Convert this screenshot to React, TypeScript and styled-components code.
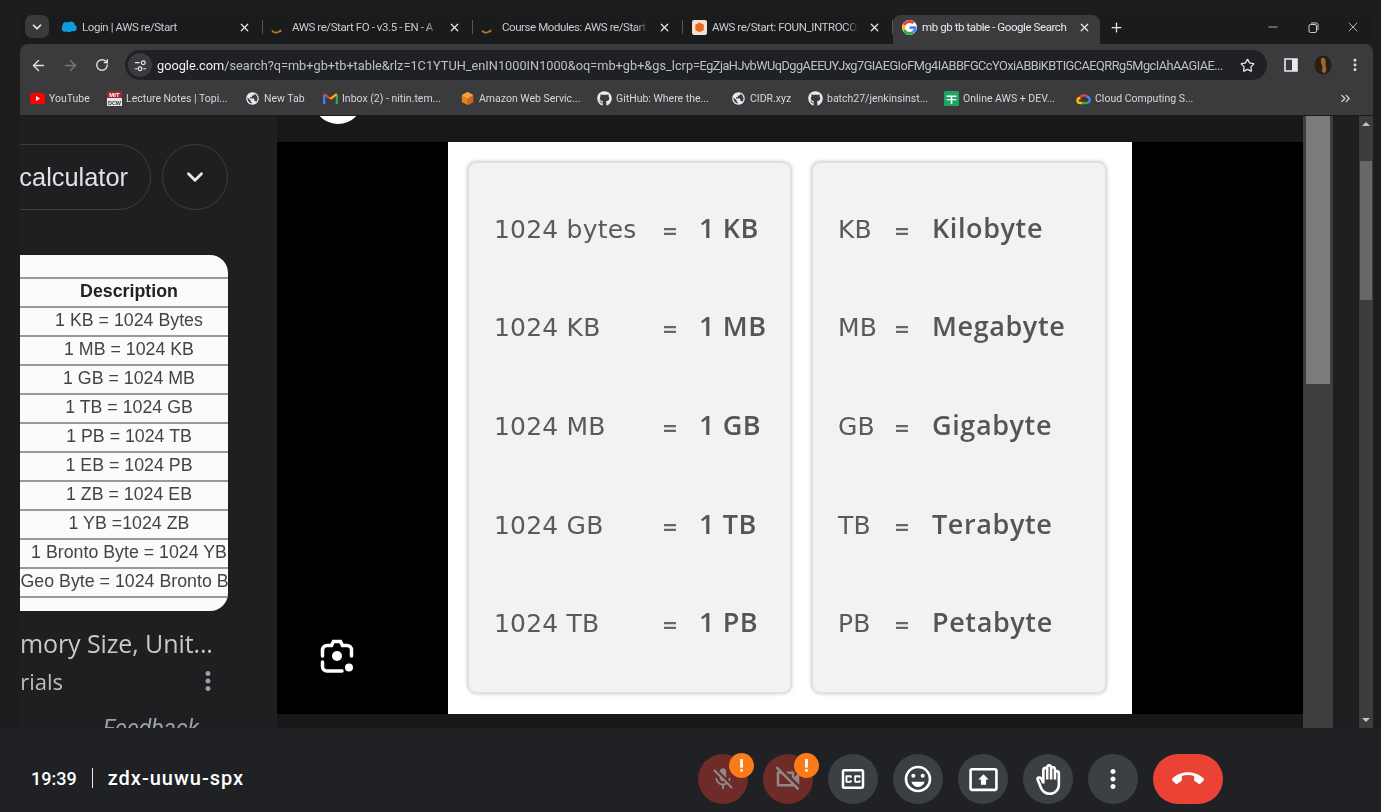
import React from 'react';
import styled, { createGlobalStyle } from 'styled-components';
import { ArrowLeft, ArrowRight, RotateCw, Star, X, Plus, Minus, ChevronDown, ChevronsRight, MoreVertical } from 'lucide-react';
import { FaGithub } from 'react-icons/fa';
import {
  MdOutlineClosedCaption, MdOutlineEmojiEmotions, MdOutlinePresentToAll, MdOutlineBackHand,
  MdMoreVert, MdCallEnd, MdMicOff, MdOutlineVideocamOff, MdPriorityHigh, MdPublic,
} from 'react-icons/md';

const Global = createGlobalStyle`
  html, body { margin: 0; padding: 0; background: #1f2125; overflow: hidden; }
  * { box-sizing: border-box; }
`;

const Page = styled.div`
  width: 1381px; height: 812px; overflow: hidden; display: flex; flex-direction: column;
  background: #1f2125; font-family: Roboto, "Liberation Sans", sans-serif;
`;
const Screen = styled.div`
  height: 728px; padding: 15px 8px 0 20px; display: flex; flex-direction: column; flex: none;
  background: #1c1d1f; filter: blur(0.35px);
`;
const TabStrip = styled.div`
  height: 29px; display: flex; align-items: stretch; padding-left: 5px; background: #1a1b1d; flex: none;
`;
const TabSearch = styled.div`
  width: 24px; height: 23px; margin-right: 4px; border-radius: 7px; background: #3a3a3c; color: #e8eaed;
  display: flex; align-items: center; justify-content: center;
`;
const Tab = styled.div<{ $active?: boolean; $last?: boolean }>`
  position: relative; width: ${p => (p.$active ? 207 : 210)}px; display: flex; align-items: center;
  padding: 0 ${p => (p.$active ? 8 : 11)}px 5px 8px; gap: 5px; flex: none;
  background: ${p => (p.$active ? '#3b3b3d' : 'transparent')};
  border-radius: 8px 8px 0 0;
  color: ${p => (p.$active ? '#e8eaed' : '#c9cbce')};
  ${p => (p.$last ? '' : `&::after { content: ''; position: absolute; right: 0; top: 5px; height: 14px; width: 1px; background: #55565a; }`)}
`;
const TabIconBox = styled.span`
  width: 16px; height: 16px; display: flex; align-items: center; justify-content: center; flex: none;
`;
const TabTitle = styled.span<{ $fade?: boolean }>`
  flex: 1; min-width: 0; white-space: nowrap; overflow: hidden; font-size: 11.5px; letter-spacing: -0.42px;
  ${p => (p.$fade ? `
    -webkit-mask-image: linear-gradient(90deg, #000 90%, transparent 98%);
    mask-image: linear-gradient(90deg, #000 90%, transparent 98%);
  ` : '')}
`;
const TabClose = styled.span`
  width: 16px; height: 16px; display: flex; align-items: center; justify-content: center; flex: none; color: #e8eaed;
`;
const NewTab = styled.span`
  width: 16px; margin-left: 9px; padding-bottom: 5px; display: flex; align-items: center; color: #e8eaed;
`;
const WindowControls = styled.div`
  margin-left: auto; padding-bottom: 5px; display: flex; align-items: center; color: #c9cbce;
`;
const WindowButton = styled.span`
  width: 40px; display: flex; justify-content: center;
`;
const Toolbar = styled.div`
  height: 71px; flex: none; background: #3b3b3d; border-radius: 8px 8px 0 0; display: flex; flex-direction: column;
`;
const NavRow = styled.div`
  height: 36px; padding: 6px 2px 0; display: flex; align-items: stretch; flex: none; color: #dfe1e5;
`;
const IconButton = styled.span<{ $dim?: boolean }>`
  width: 32px; display: flex; align-items: center; justify-content: center; flex: none;
  color: ${p => (p.$dim ? '#77787b' : '#dfe1e5')};
`;
const Omnibox = styled.div`
  width: 1142px; margin: 0 8px 0 7px; height: 30px; border-radius: 15px; background: #202124;
  display: flex; align-items: center; padding: 0 12px 0 3px; flex: none;
`;
const SiteChip = styled.span`
  width: 24px; height: 24px; border-radius: 50%; background: #3b3b3d; display: flex; align-items: center; justify-content: center; flex: none; margin-right: 5px;
`;
const Url = styled.span`
  flex: 1; min-width: 0; margin-right: 11px; overflow: hidden; white-space: nowrap; font-size: 12.75px; color: #bdc1c6;
  b { font-weight: 400; color: #f1f3f4; }
`;
const UrlTail = styled.span`
  letter-spacing: -0.52px;
`;
const Bookmarks = styled.div`
  height: 35px; padding: 5px 0 4px 10px; display: flex; align-items: center; flex: none;
`;
const Bookmark = styled.div<{ $w: number }>`
  width: ${p => p.$w}px; flex: none; display: flex; align-items: center; gap: 4px; color: #d5d7da; font-size: 10.5px; white-space: nowrap;
`;
const BookmarkIcon = styled.span`
  width: 15px; height: 15px; display: flex; align-items: center; justify-content: center; flex: none; color: #e8eaed;
`;
const MoreBookmarks = styled.span`
  margin-left: auto; margin-right: 20px; color: #d5d7da; display: flex;
`;
const Workspace = styled.div`
  margin-top: 1px; height: 612px; display: flex; flex: none; background: #1f1f21;
`;
const SidePanel = styled.div`
  width: 257px; flex: none; overflow: hidden; display: flex; flex-direction: column; padding-top: 28px; color: #c8cacc;
`;
const ChipRow = styled.div`
  height: 66px; display: flex; gap: 11px; flex: none;
`;
const Pill = styled.div`
  width: 171px; margin-left: -40px; height: 66px; border-radius: 33px; border: 1px solid #3c3d40; flex: none;
  display: flex; align-items: center; justify-content: flex-end; padding-right: 22px;
  font-family: "Liberation Sans", Arial, sans-serif; font-size: 25.4px; color: #dfe1e5;
`;
const RoundChip = styled.div`
  width: 66px; height: 66px; border-radius: 50%; border: 1px solid #3c3d40; flex: none; display: flex; align-items: center; justify-content: center; color: #e8eaed;
`;
const TableCard = styled.div`
  width: 228px; height: 356px; margin: 45px 0 0 -20px; padding-top: 22px; border-radius: 0 18px 18px 0; background: #fbfbfb;
  overflow: hidden; flex: none; font-family: "Liberation Sans", Arial, sans-serif; filter: blur(0.5px);
`;
const SizeRow = styled.div<{ $head?: boolean }>`
  width: 258px; height: 29px; padding-bottom: 2px; border-top: 2px solid #999; display: flex; align-items: center; justify-content: center;
  font-size: 17.8px; white-space: nowrap; color: ${p => (p.$head ? '#222' : '#444')}; font-weight: ${p => (p.$head ? 700 : 400)};
  &:last-child { height: 16px; }
`;
const SizeText = styled.span` flex: none; `;
const CaptionTitle = styled.div`
  margin-top: 16px; width: 212px; height: 32px; line-height: 32px; font-size: 25px; white-space: nowrap; flex: none; color: #c6c8ca;
  font-family: "Open Sans", Roboto, sans-serif; letter-spacing: -0.1px;
`;
const CaptionRow = styled.div`
  margin-top: 8px; height: 28px; display: flex; align-items: center; justify-content: space-between; padding-right: 54px; flex: none;
`;
const Source = styled.span`
  font-size: 22px; color: #bcbec0; margin-left: -13px; font-family: "Open Sans", Roboto, sans-serif;
`;
const Dots = styled.span` color: #9aa0a6; display: flex; `;
const Feedback = styled.div`
  margin: 21px 0 0 83px; font-style: italic; font-size: 23px; line-height: 26px; color: #9aa0a6; flex: none;
`;
const Viewer = styled.div`
  position: relative; width: 1026px; flex: none; overflow: hidden; display: flex; flex-direction: column; background: #181819;
`;
const CloseDisc = styled.div`
  position: absolute; left: 36px; top: -42px; width: 50px; height: 50px; border-radius: 50%; background: #fff;
`;
const Letterbox = styled.div`
  margin-top: 26px; height: 572px; background: #000; display: flex; justify-content: center; flex: none;
`;
const LensButton = styled.div`
  position: absolute; left: 43px; top: 523px; width: 34px; height: 34px; color: #fff;
`;
const Picture = styled.div`
  width: 684px; height: 572px; background: #fff; padding: 20px 26px 21px 20px; display: grid; grid-template-columns: 323px 294px; gap: 21px; filter: blur(0.5px);
`;
const UnitCard = styled.div`
  background: #f2f2f2; border: 1px solid #e0e0e0; border-radius: 8px; box-shadow: 0 0 4px #b5b5b5;
  padding: 15px 0 21px 25px; display: grid; grid-template-rows: repeat(5, 1fr); font-family: "DejaVu Sans", sans-serif; color: #5a5a5a;
`;
const UnitRow = styled.div<{ $cols: string }>`
  display: grid; grid-template-columns: ${p => p.$cols}; align-items: baseline; align-content: center; font-size: 25px; letter-spacing: 0.2px; white-space: nowrap;
`;
const UnitStrong = styled.span`
  font-family: "Open Sans", "DejaVu Sans", sans-serif; font-weight: 600; color: #555; font-size: 27px; letter-spacing: 0.6px;
`;
const UnitEq = styled.span` font-size: 19px; font-weight: 700; color: #666; `;
const InnerScroll = styled.div`
  width: 30px; flex: none; background: #3e3e3e; padding: 0 3px;
`;
const InnerThumb = styled.div` height: 268px; background: #7b7b7b; `;
const Gutter = styled.div` width: 26px; flex: none; background: #1f1f21; `;
const OuterScroll = styled.div`
  width: 14px; flex: none; background: #3c3c3c; display: flex; flex-direction: column; align-items: center; padding-top: 6px; color: #c4c4c4;
`;
const Arrow = styled.div<{ $down?: boolean }>`
  width: 0; height: 0; border-left: 4px solid transparent; border-right: 4px solid transparent; flex: none;
  ${p => (p.$down ? 'border-top: 4px solid #c4c4c4; margin-top: auto; margin-bottom: 6px;' : 'border-bottom: 4px solid #c4c4c4;')}
`;
const OuterThumb = styled.div` width: 12px; height: 139px; margin-top: 35px; background: #676767; flex: none; `;
const MeetBar = styled.div`
  height: 84px; flex: none; display: flex; align-items: flex-start; padding-top: 26px; background: #1f2125; color: #fff;
`;
const MeetInfo = styled.div`
  width: 698px; flex: none; height: 50px; display: flex; align-items: center; padding-left: 31px; padding-bottom: 2px;
`;
const Clock = styled.span` font-size: 18px; font-weight: 500; `;
const InfoBar = styled.span` width: 1px; height: 20px; background: #e8eaed; margin: 0 15px; `;
const MeetCode = styled.span` font-size: 20px; font-weight: 500; letter-spacing: 1px; `;
const Controls = styled.div` display: flex; gap: 15px; `;
const ControlButton = styled.div<{ $tone?: 'warn' | 'end' }>`
  position: relative; height: 50px; width: ${p => (p.$tone === 'end' ? 70 : 50)}px; border-radius: 25px; display: flex; align-items: center; justify-content: center; flex: none;
  background: ${p => (p.$tone === 'warn' ? '#6e2b27' : p.$tone === 'end' ? '#ea4335' : '#3c4043')};
  color: ${p => (p.$tone === 'warn' ? '#8f8a88' : '#fff')};
`;
const Badge = styled.span`
  position: absolute; right: -6px; top: -1px; width: 25px; height: 25px; border-radius: 50%; background: #fa7b17; color: #fff; display: flex; align-items: center; justify-content: center;
`;

const Salesforce = () => (
  <svg width="16" height="12" viewBox="0 0 16 12"><g fill="#0d9dda"><circle cx="5" cy="4.500" r="3.500" /><circle cx="10" cy="4" r="3.600" /><circle cx="12.500" cy="7" r="3.200" /><circle cx="4" cy="7.500" r="3.200" /><circle cx="8" cy="8" r="3.200" /></g></svg>
);
const AwsSmile = () => (
  <svg width="16" height="16" viewBox="0 0 16 16"><path d="M1 11.500c1.500 2.500 5 3 8 .4M9.300 10.700l.2 1.700-1.700.3" fill="none" stroke="#b87a1c" strokeWidth="1.600" /></svg>
);
const Cube = ({ s = 13 }: { s?: number }) => (
  <svg width={s} height={s} viewBox="0 0 14 15"><path d="M7 0l6.500 3.500v8L7 15 .5 11.500v-8z" fill="#e8821e" /><path d="M7 7.500v7.500l6.500-3.500v-8z" fill="#c9681a" /><path d="M7 0l6.500 3.500L7 7.500.5 3.500z" fill="#f5a040" /></svg>
);
const AwsTile = () => (
  <svg width="15" height="15" viewBox="0 0 15 15"><rect width="15" height="15" rx="2" fill="#f4dfd0" /><g transform="translate(3 2.500) scale(.65)"><path d="M7 0l6.500 3.500v8L7 15 .5 11.500v-8z" fill="#e8681e" /></g></svg>
);
const GoogleG = () => (
  <svg width="15" height="15" viewBox="0 0 48 48" style={{ background: '#fff', borderRadius: '50%' }}>
    <path fill="#EA4335" d="M24 9.500c3.500 0 6.700 1.200 9.200 3.600l6.900-6.900C35.900 2.400 30.500 0 24 0 14.600 0 6.500 5.400 2.600 13.200l8 6.200C12.400 13.700 17.700 9.500 24 9.500z" />
    <path fill="#4285F4" d="M46.100 24.500c0-1.600-.1-3.100-.4-4.500H24v9h12.400c-.5 2.900-2.200 5.400-4.700 7l7.600 5.900c4.400-4.100 6.800-10.100 6.800-17.400z" />
    <path fill="#FBBC05" d="M10.500 28.600c-.5-1.400-.8-3-.8-4.600s.3-3.200.8-4.600l-8-6.200C.9 16.500 0 20.100 0 24s.9 7.500 2.600 10.800l7.900-6.200z" />
    <path fill="#34A853" d="M24 48c6.500 0 11.900-2.100 15.900-5.800l-7.600-5.900c-2.100 1.400-4.900 2.300-8.200 2.300-6.300 0-11.600-4.200-13.500-9.900l-8 6.200C6.500 42.600 14.600 48 24 48z" />
  </svg>
);
const Tune = () => (
  <svg width="13" height="13" viewBox="0 0 14 14" fill="none" stroke="#e8eaed" strokeWidth="1.300"><path d="M1 4h5M1 10.500h3M10 10.500h3" /><circle cx="10" cy="4" r="2" /><circle cx="6.500" cy="10.500" r="2" /></svg>
);
const Youtube = () => (
  <svg width="15" height="11" viewBox="0 0 15 11"><rect width="15" height="11" rx="2.500" fill="#f00" /><path d="M6 3l4 2.500L6 8z" fill="#fff" /></svg>
);
const MitIcon = () => (
  <svg width="15" height="15" viewBox="0 0 15 15"><rect width="15" height="7" fill="#a3262b" /><rect y="7" width="15" height="8" fill="#e6e6e6" /><text x="7.500" y="6" fontSize="6" fontWeight="700" textAnchor="middle" fill="#fff" fontFamily="Liberation Sans">MIT</text><text x="7.500" y="13.500" fontSize="5.500" fontWeight="700" textAnchor="middle" fill="#333" fontFamily="Liberation Sans">DCW</text></svg>
);
const GmailM = () => (
  <svg width="15" height="12" viewBox="0 0 15 12" fill="none" strokeWidth="2.200"><path d="M1.200 12V3" stroke="#4285f4" /><path d="M13.800 12V3" stroke="#34a853" /><path d="M1.200 2l6.300 4.800" stroke="#ea4335" /><path d="M7.500 6.800L13.800 2" stroke="#fbbc05" /></svg>
);
const SheetIcon = () => (
  <svg width="15" height="15" viewBox="0 0 15 15"><rect width="15" height="15" rx="1.500" fill="#1fa463" /><path d="M2.500 4.500h10V6H8.300v7H6.700V6H2.500z" fill="#fff" /><path d="M2.500 8h10v1.300h-10z" fill="#fff" opacity=".85" /></svg>
);
const CloudHex = () => (
  <svg width="15" height="13" viewBox="0 0 15 13" fill="none" strokeWidth="2.400"><path d="M4 7.500a3.800 3.800 0 0 1 6.500-3" stroke="#ea4335" /><path d="M10.500 4.500A3.500 3.500 0 0 1 12 11" stroke="#4285f4" /><path d="M12 11H6" stroke="#34a853" /><path d="M6 11H4a2.500 2.500 0 0 1 0-5" stroke="#fbbc05" /></svg>
);
const Lens = () => (
  <svg width="34" height="34" viewBox="0 0 34 34" fill="none" stroke="currentColor" strokeWidth="3.500" strokeLinecap="round">
    <path d="M2.500 17v-6a4.500 4.500 0 0 1 4.500-4.500h4.500l2-4h7l2 4H27a4.500 4.500 0 0 1 4.500 4.500v6" />
    <path d="M2.500 23v4.500A4.500 4.500 0 0 0 7 32h15" />
    <circle cx="17" cy="17" r="5" fill="currentColor" stroke="none" />
    <circle cx="29" cy="28.500" r="4" fill="currentColor" stroke="none" />
  </svg>
);
const SidePanelIcon = () => (
  <svg width="14" height="14" viewBox="0 0 14 14"><path d="M1 1h12v12H1z" fill="none" stroke="#e8eaed" strokeWidth="1.600" /><rect x="8" y="1" width="5" height="12" fill="#e8eaed" /></svg>
);
const Avatar = () => (
  <svg width="18" height="20" viewBox="0 0 18 20"><ellipse cx="9" cy="10" rx="8.500" ry="9.500" fill="#2a1d12" /><path d="M8 3c3-1 4 2 3.500 5s1.500 5 .5 8-4 2-4 0 1-4 0-6-2-6 0-7z" fill="#a5652a" /></svg>
);

const tabs = [
  { title: 'Login | AWS re/Start', icon: <Salesforce /> },
  { title: 'AWS re/Start FO - v3.5 - EN - A', icon: <AwsSmile />, fade: true },
  { title: 'Course Modules: AWS re/Start F', icon: <AwsSmile />, fade: true },
  { title: 'AWS re/Start: FOUN_INTROCOM', icon: <AwsTile />, fade: true },
  { title: 'mb gb tb table - Google Search', icon: <GoogleG />, active: true },
];

const marks = [
  { w: 77, label: 'YouTube', icon: <Youtube /> },
  { w: 138, label: 'Lecture Notes | Topi...', icon: <MitIcon /> },
  { w: 78, label: 'New Tab', icon: <MdPublic size={17} /> },
  { w: 137, label: 'Inbox (2) - nitin.tem...', icon: <GmailM /> },
  { w: 137, label: 'Amazon Web Servic...', icon: <Cube /> },
  { w: 134, label: 'GitHub: Where the...', icon: <FaGithub size={15} /> },
  { w: 77, label: 'CIDR.xyz', icon: <MdPublic size={17} /> },
  { w: 136, label: 'batch27/jenkinsinst...', icon: <FaGithub size={15} /> },
  { w: 132, label: 'Online AWS + DEV...', icon: <SheetIcon /> },
  { w: 130, label: 'Cloud Computing S...', icon: <CloudHex /> },
];

const sizes = [
  'Description', '1 KB = 1024 Bytes', '1 MB = 1024 KB', '1 GB = 1024 MB', '1 TB = 1024 GB', '1 PB = 1024 TB',
  '1 EB = 1024 PB', '1 ZB = 1024 EB', '1 YB =1024 ZB', '1 Bronto Byte = 1024 YB', '1 Geo Byte = 1024 Bronto Byte',
];

const conversions = [
  ['1024 bytes', '1 KB'], ['1024 KB', '1 MB'], ['1024 MB', '1 GB'], ['1024 GB', '1 TB'], ['1024 TB', '1 PB'],
];
const names = [
  ['KB', 'Kilobyte'], ['MB', 'Megabyte'], ['GB', 'Gigabyte'], ['TB', 'Terabyte'], ['PB', 'Petabyte'],
];

export default function App() {
  return (
    <Page>
      <Global />
      <Screen>
        <TabStrip>
          <TabSearch><ChevronDown size={14} strokeWidth={3} /></TabSearch>
          {tabs.map((t, i) => (
            <Tab key={t.title} $active={t.active} $last={i >= 4}>
              <TabIconBox>{t.icon}</TabIconBox>
              <TabTitle $fade={t.fade}>{t.title}</TabTitle>
              <TabClose><X size={13} strokeWidth={2.2} /></TabClose>
            </Tab>
          ))}
          <NewTab><Plus size={15} strokeWidth={2} /></NewTab>
          <WindowControls>
            <WindowButton><Minus size={14} strokeWidth={1.4} /></WindowButton>
            <WindowButton>
              <svg width="11" height="11" viewBox="0 0 11 11" fill="none" stroke="currentColor"><rect x="1" y="2.500" width="7.500" height="8" rx="1.500" /><path d="M3 1h5.500a2 2 0 0 1 1.500 1.500V8" /></svg>
            </WindowButton>
            <WindowButton><X size={16} strokeWidth={1.3} /></WindowButton>
          </WindowControls>
        </TabStrip>
        <Toolbar>
          <NavRow>
            <IconButton><ArrowLeft size={17} strokeWidth={2} /></IconButton>
            <IconButton $dim><ArrowRight size={17} strokeWidth={2} /></IconButton>
            <IconButton><RotateCw size={14} strokeWidth={2.4} /></IconButton>
            <Omnibox>
              <SiteChip><Tune /></SiteChip>
              <Url><b>google.com</b>/search?q=mb+gb+tb+table&amp;rlz=1C1YTUH_enIN1000IN1000&amp;oq=mb+gb+&amp;gs_lcrp<UrlTail>=EgZjaHJvbWUqDggAEEUYJxg7GIAEGIoFMg4IABBFGCcYOxiABBiKBTIGCAEQRRg5MgcIAhAAGIAE...</UrlTail></Url>
              <Star size={15} strokeWidth={2} color="#e8eaed" />
            </Omnibox>
            <IconButton><SidePanelIcon /></IconButton>
            <IconButton><Avatar /></IconButton>
            <IconButton><MoreVertical size={16} strokeWidth={2.4} /></IconButton>
          </NavRow>
          <Bookmarks>
            {marks.map(m => (
              <Bookmark key={m.label} $w={m.w}>
                <BookmarkIcon>{m.icon}</BookmarkIcon>
                {m.label}
              </Bookmark>
            ))}
            <MoreBookmarks><ChevronsRight size={15} /></MoreBookmarks>
          </Bookmarks>
        </Toolbar>
        <Workspace>
          <SidePanel>
            <ChipRow>
              <Pill>calculator</Pill>
              <RoundChip><ChevronDown size={26} strokeWidth={2.6} /></RoundChip>
            </ChipRow>
            <TableCard>
              {sizes.map((s, i) => (
                <SizeRow key={s} $head={i === 0}><SizeText>{s}</SizeText></SizeRow>
              ))}
              <SizeRow />
            </TableCard>
            <CaptionTitle>mory Size, Unit...</CaptionTitle>
            <CaptionRow>
              <Source>orials</Source>
              <Dots><MdMoreVert size={30} /></Dots>
            </CaptionRow>
            <Feedback>Feedback</Feedback>
          </SidePanel>
          <Viewer>
            <CloseDisc />
            <Letterbox>
              <Picture>
                <UnitCard>
                  {conversions.map(([a, b]) => (
                    <UnitRow key={a} $cols="168px 37px 1fr">
                      <span>{a}</span><UnitEq>=</UnitEq><UnitStrong>{b}</UnitStrong>
                    </UnitRow>
                  ))}
                </UnitCard>
                <UnitCard>
                  {names.map(([a, b]) => (
                    <UnitRow key={a} $cols="56px 38px 1fr">
                      <span>{a}</span><UnitEq>=</UnitEq><UnitStrong>{b}</UnitStrong>
                    </UnitRow>
                  ))}
                </UnitCard>
              </Picture>
            </Letterbox>
            <LensButton><Lens /></LensButton>
          </Viewer>
          <InnerScroll><InnerThumb /></InnerScroll>
          <Gutter />
          <OuterScroll>
            <Arrow />
            <OuterThumb />
            <Arrow $down />
          </OuterScroll>
        </Workspace>
      </Screen>
      <MeetBar>
        <MeetInfo>
          <Clock>19:39</Clock>
          <InfoBar />
          <MeetCode>zdx-uuwu-spx</MeetCode>
        </MeetInfo>
        <Controls>
          <ControlButton $tone="warn"><MdMicOff size={26} /><Badge><MdPriorityHigh size={17} /></Badge></ControlButton>
          <ControlButton $tone="warn"><MdOutlineVideocamOff size={30} /><Badge><MdPriorityHigh size={17} /></Badge></ControlButton>
          <ControlButton><MdOutlineClosedCaption size={30} /></ControlButton>
          <ControlButton><MdOutlineEmojiEmotions size={32} /></ControlButton>
          <ControlButton><MdOutlinePresentToAll size={31} /></ControlButton>
          <ControlButton><MdOutlineBackHand size={31} /></ControlButton>
          <ControlButton><MdMoreVert size={30} /></ControlButton>
          <ControlButton $tone="end"><MdCallEnd size={32} /></ControlButton>
        </Controls>
      </MeetBar>
    </Page>
  );
}
